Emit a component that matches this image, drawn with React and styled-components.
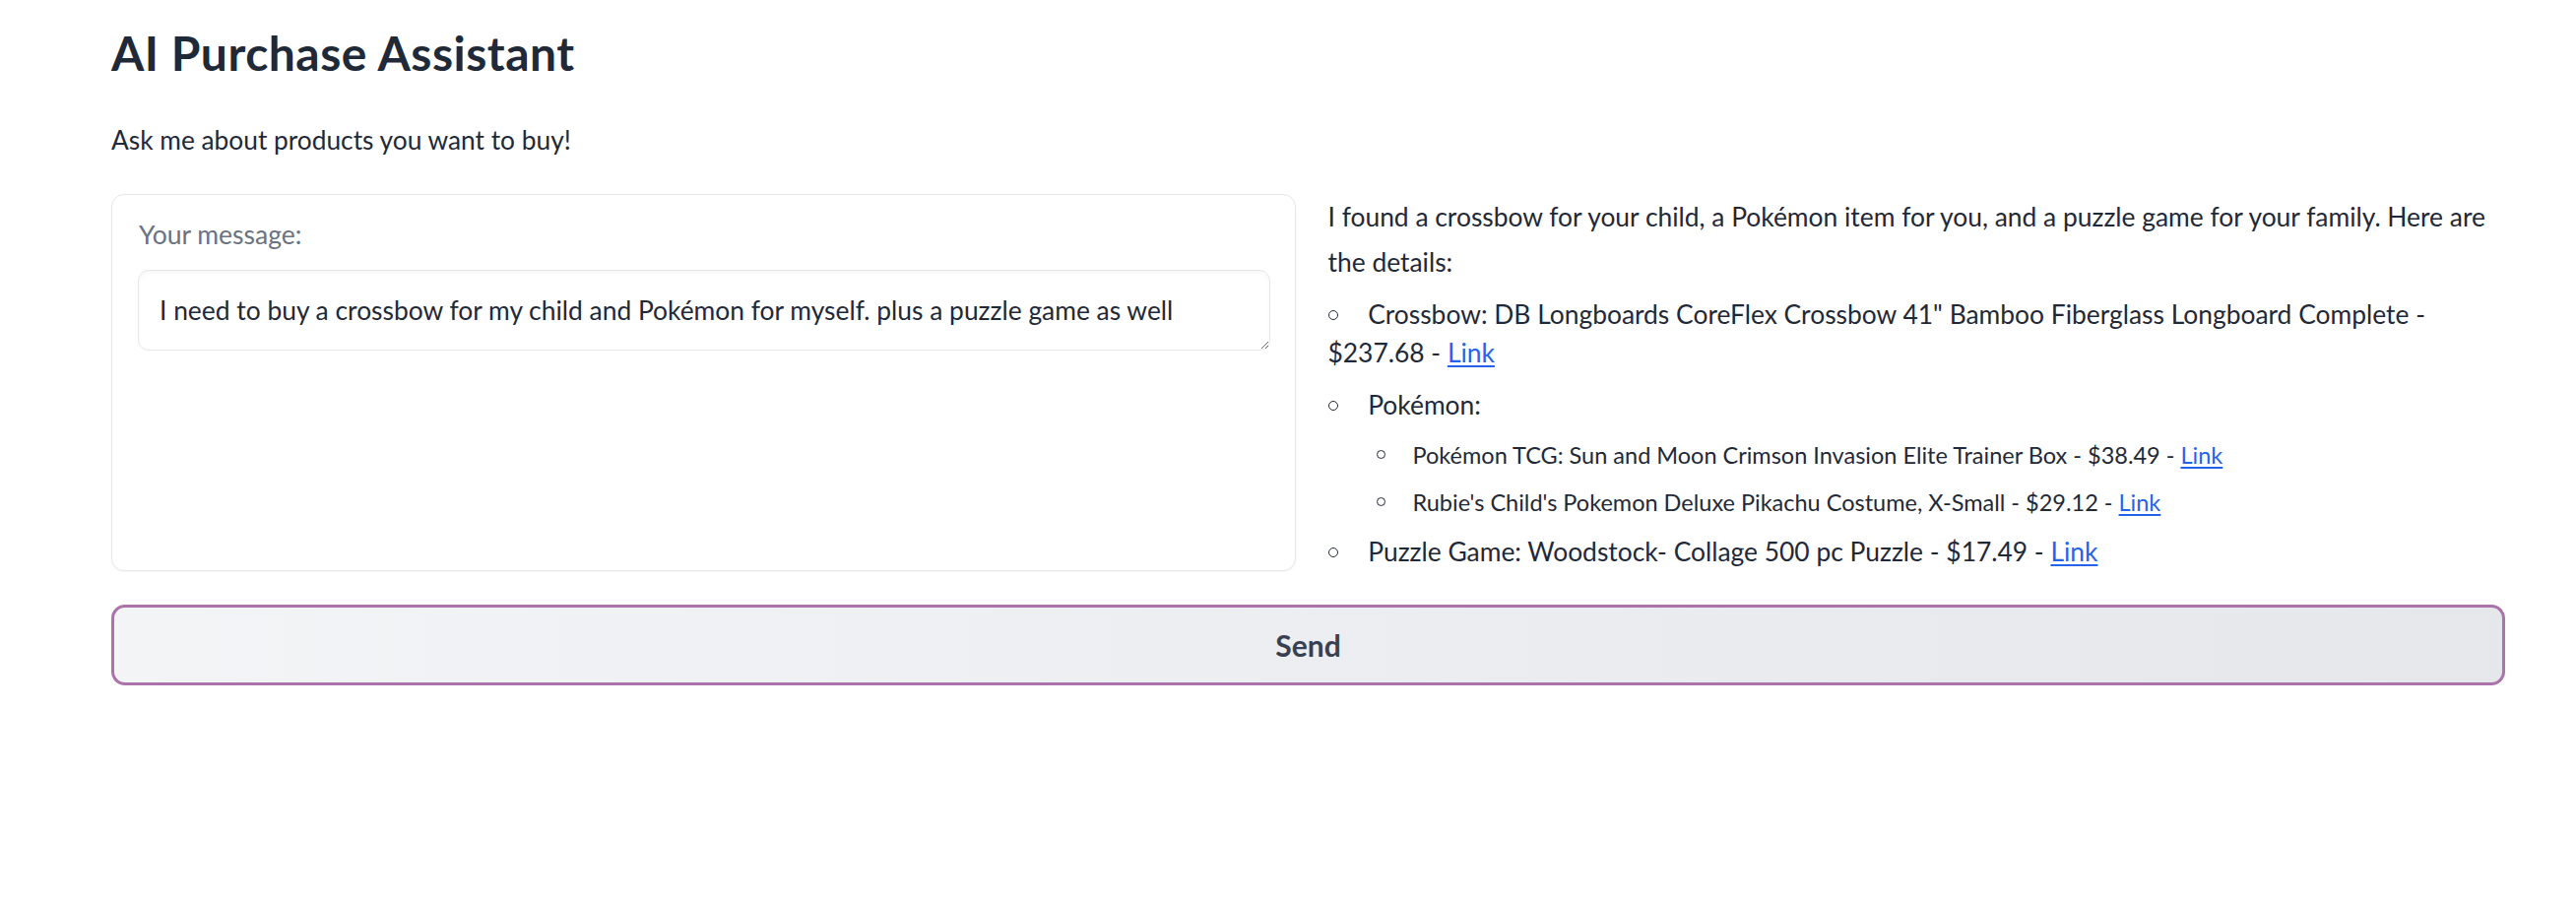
import React from "react";
import styled, { createGlobalStyle } from "styled-components";

const FONT = `"Lato", "Noto Sans", sans-serif`;

const GlobalStyle = createGlobalStyle`
  html, body { margin: 0; padding: 0; background: #ffffff; }
  body { font-family: ${FONT}; color: #1f2937; }
  * { box-sizing: border-box; }
`;

const Page = styled.div`
  padding: 27px 72px 0 113px;
`;

const Title = styled.h1`
  margin: 0;
  font-size: 48px;
  line-height: 54px;
  font-weight: 700;
  letter-spacing: 0.5px;
  color: #1f2937;
`;

const Subtitle = styled.p`
  margin: 43px 0 0;
  font-size: 26.3px;
  line-height: 36px;
  color: #1f2937;
`;

const Row = styled.div`
  margin-top: 37px;
  display: grid;
  grid-template-columns: 1fr 1fr;
  column-gap: 26px;
  align-items: stretch;
`;

const Panel = styled.div`
  min-height: 382px;
  border: 1px solid #e5e7eb;
  border-radius: 13px;
  background: #ffffff;
  box-shadow: 0 1px 2px rgba(0, 0, 0, 0.04);
  padding: 25px 25px 20px 26px;
  display: flex;
  flex-direction: column;
`;

const Label = styled.label`
  display: block;
  font-size: 26.5px;
  line-height: 30px;
  color: #6b7280;
  margin-left: 1px;
`;

const TextArea = styled.textarea`
  display: block;
  width: 100%;
  height: 82px;
  margin-top: 21px;
  padding: 22px 21px 22px;
  font-family: ${FONT};
  font-size: 26.4px;
  line-height: 36px;
  color: #1f2937;
  background: #ffffff;
  border: 1px solid #e5e7eb;
  border-radius: 11px;
  box-shadow: inset 0 2px 4px rgba(0, 0, 0, 0.04);
  resize: vertical;
  outline: none;
  overflow: hidden;
`;

const Markdown = styled.div`
  padding-left: 7px;
  color: #1f2937;
`;

const Para = styled.p`
  margin: 0;
  font-size: 26.4px;
  line-height: 46px;
`;

const List = styled.ul`
  list-style: none;
  margin: ${(p) => (p.$nested ? "14px 0 0" : "10.5px 0 0")};
  padding: 0 0 0 ${(p) => (p.$nested ? "49.7px" : "0")};
`;

const Item = styled.li`
  font-size: ${(p) => (p.$nested ? "23.5px" : "26.4px")};
  line-height: ${(p) => (p.$nested ? "34px" : "39px")};
  & + & { margin-top: 14px; }
  &::before {
    content: "";
    display: inline-block;
    width: ${(p) => (p.$nested ? "7px" : "8px")};
    height: ${(p) => (p.$nested ? "7px" : "8px")};
    border: 1px solid #1f2937;
    border-radius: 50%;
    vertical-align: ${(p) => (p.$nested ? "4.5px" : "3.5px")};
    margin-right: ${(p) => (p.$nested ? "27.3px" : "30.7px")};
  }
`;

const Link = styled.a`
  color: #2563eb;
  text-decoration: underline;
  text-underline-offset: 3px;
`;

const SendButton = styled.button`
  display: block;
  width: 100%;
  height: 82px;
  margin-top: 34px;
  border: 3px solid #ab72ab;
  border-radius: 14px;
  background: linear-gradient(to right, #f3f4f6, #e6e7eb);
  font-family: ${FONT};
  font-size: 30px;
  font-weight: 700;
  color: #374151;
  cursor: pointer;
`;

export default function App() {
  return (
    <>
      <GlobalStyle />
      <Page>
        <Title>AI Purchase Assistant</Title>
        <Subtitle>Ask me about products you want to buy!</Subtitle>
        <Row>
          <Panel>
            <Label htmlFor="msg">Your message:</Label>
            <TextArea
              id="msg"
              readOnly
              defaultValue="I need to buy a crossbow for my child and Pokémon for myself. plus a puzzle game as well"
            />
          </Panel>
          <Markdown>
            <Para>
              I found a crossbow for your child, a Pokémon item for you, and a puzzle game for your family. Here are the details:
            </Para>
            <List>
              <Item>
                Crossbow: DB Longboards CoreFlex Crossbow 41" Bamboo Fiberglass Longboard Complete - $237.68 - <Link href="#">Link</Link>
              </Item>
              <Item>
                Pokémon:
                <List $nested>
                  <Item $nested>
                    Pokémon TCG: Sun and Moon Crimson Invasion Elite Trainer Box - $38.49 - <Link href="#">Link</Link>
                  </Item>
                  <Item $nested>
                    Rubie's Child's Pokemon Deluxe Pikachu Costume, X-Small - $29.12 - <Link href="#">Link</Link>
                  </Item>
                </List>
              </Item>
              <Item>
                Puzzle Game: Woodstock- Collage 500 pc Puzzle - $17.49 - <Link href="#">Link</Link>
              </Item>
            </List>
          </Markdown>
        </Row>
        <SendButton type="button">Send</SendButton>
      </Page>
    </>
  );
}
